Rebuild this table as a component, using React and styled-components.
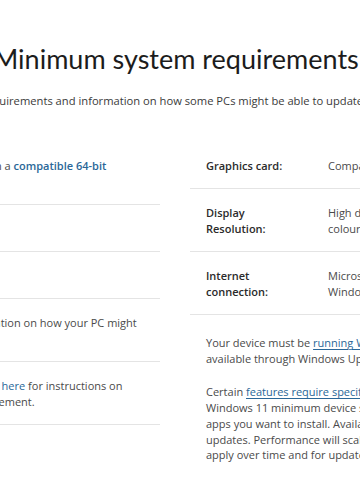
import React from "react";
import styled, { createGlobalStyle } from "styled-components";

const LEFT_W = 555;
const RIGHT_W = 581;
const GAP = 30;
const LEFT_EDGE = 160;

const GlobalStyle = createGlobalStyle`
  html, body { margin: 0; padding: 0; background: #ffffff; overflow: hidden; }
  body { font-family: "Open Sans", "Noto Sans", sans-serif; }
`;

const Viewport = styled.div`
  width: 360px;
  height: 504px;
  overflow: hidden;
`;

const Page = styled.main`
  width: ${LEFT_W + GAP + RIGHT_W}px;
  margin-left: ${LEFT_EDGE - LEFT_W}px;
  padding-top: 43px;
`;

const Header = styled.header`
  text-align: center;
  padding-right: ${LEFT_W - 551 + 20}px;
`;

const Title = styled.h1`
  margin: 0;
  font-family: Lato, "Open Sans", sans-serif;
  font-size: 27px;
  line-height: 32px;
  font-weight: 400;
  color: #1c1c1c;
  white-space: nowrap;
`;

const Lead = styled.p`
  margin: 18px 0 0;
  font-size: 11.2px;
  line-height: 16px;
  color: #3a3a3a;
  white-space: nowrap;
`;

const Columns = styled.div`
  display: grid;
  grid-template-columns: ${LEFT_W}px ${RIGHT_W}px;
  column-gap: ${GAP}px;
  margin-top: 33px;
  align-items: start;
`;

const SpecTable = styled.div`
  display: flex;
  flex-direction: column;
`;

const SpecRow = styled.div`
  display: grid;
  grid-template-columns: 122px 1fr;
  padding: 16px 16px 14px;
  border-bottom: 1px solid #e4e4e4;
  font-size: 11px;
  line-height: 16px;
`;

const Label = styled.div`
  font-weight: 600;
  color: #2b2b2b;
  padding-right: 30px;
`;

const Value = styled.div`
  color: #4a4a4a;
  white-space: nowrap;
`;

const Link = styled.a`
  color: #2a6798;
  font-weight: ${(p) => (p.$strong ? 600 : 400)};
  text-decoration: ${(p) => (p.$underline ? "underline" : "none")};
  text-underline-offset: 2px;
`;

const Notes = styled.div`
  padding: 20px 16px 0;
`;

const Note = styled.p`
  margin: 0 0 18px;
  font-size: 11px;
  line-height: 15.7px;
  color: #4a4a4a;
  white-space: nowrap;
`;

const leftRows = [
  {
    label: "Processor:",
    value: (
      <>
        1 gigahertz (GHz) or faster with 2 or more cores on a <Link $strong href="#">compatible 64-bit</Link>
        <br />
        <Link $strong href="#">processor</Link> or System on a Chip (SoC).
      </>
    ),
  },
  { label: "RAM:", value: "4 gigabyte (GB) or greater." },
  { label: "Storage:", value: "64 GB or larger storage device." },
  {
    label: "System firmware:",
    value: (
      <>
        UEFI, Secure Boot capable. <Link href="#">Check here</Link> for information on how your PC might
        <br />
        be able to meet this requirement.
      </>
    ),
  },
  {
    label: "TPM:",
    value: (
      <>
        Trusted Platform Module (TPM) version 2.0. <Link href="#">Check here</Link> for instructions on
        <br />
        how your PC might be enabled to meet this requirement.
      </>
    ),
  },
];

const rightRows = [
  { label: "Graphics card:", value: "Compatible with DirectX 12 or later with WDDM 2.0 driver." },
  {
    label: "Display Resolution:",
    value: (
      <>
        High definition (720p) display that is greater than 9" diagonally, 8 bits per
        <br />
        colour channel.
      </>
    ),
  },
  {
    label: "Internet connection:",
    value: (
      <>
        Microsoft account and internet connectivity required for setup for
        <br />
        Windows 11 Home.
      </>
    ),
  },
];

export default function App() {
  return (
    <>
      <GlobalStyle />
      <Viewport>
        <Page>
          <Header>
            <Title>Minimum system requirements</Title>
            <Lead>
              The minimum requirements and information on how some PCs might be able to update to Windows 11.
            </Lead>
          </Header>
          <Columns>
            <SpecTable>
              {leftRows.map((r) => (
                <SpecRow key={r.label}>
                  <Label>{r.label}</Label>
                  <Value>{r.value}</Value>
                </SpecRow>
              ))}
            </SpecTable>
            <div>
              <SpecTable>
                {rightRows.map((r) => (
                  <SpecRow key={r.label}>
                    <Label>{r.label}</Label>
                    <Value>{r.value}</Value>
                  </SpecRow>
                ))}
              </SpecTable>
              <Notes>
                <Note>
                  Your device must be <Link $underline href="#">running Windows 10, version 2004</Link> or later, to upgrade. Free updates are
                  <br />
                  available through Windows Update in Settings &gt; Update and Security.
                </Note>
                <Note>
                  Certain <Link $underline href="#">features require specific hardware</Link>. System requirements to run some apps will exceed the
                  <br />
                  Windows 11 minimum device specifications. Check device compatibility information specific to the
                  <br />
                  apps you want to install. Available storage on your device will vary based on installed apps and
                  <br />
                  updates. Performance will scale with higher end, more capable PCs. Additional requirements may
                  <br />
                  apply over time and for updates.
                </Note>
              </Notes>
            </div>
          </Columns>
        </Page>
      </Viewport>
    </>
  );
}
